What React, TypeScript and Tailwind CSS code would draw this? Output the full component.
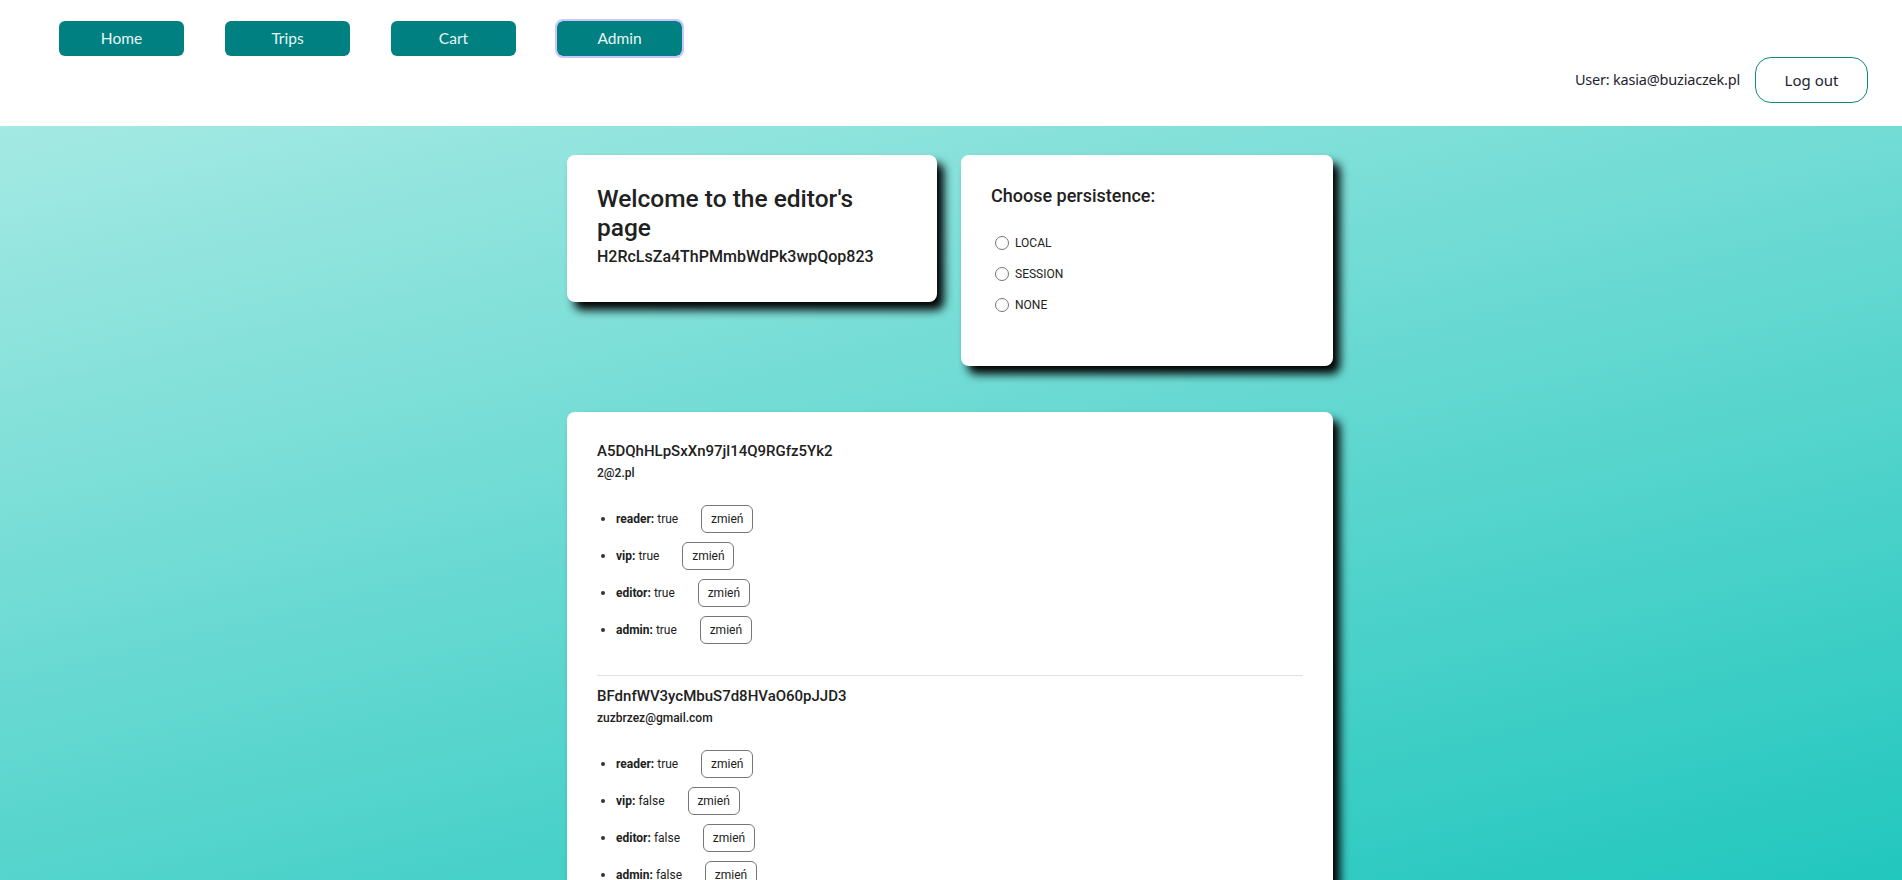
import React from "react";

type Roles = { reader: boolean; vip: boolean; editor: boolean; admin: boolean };

const users: { uid: string; email: string; roles: Roles }[] = [
  {
    uid: "A5DQhHLpSxXn97jl14Q9RGfz5Yk2",
    email: "2@2.pl",
    roles: { reader: true, vip: true, editor: true, admin: true },
  },
  {
    uid: "BFdnfWV3ycMbuS7d8HVaO60pJJD3",
    email: "zuzbrzez@gmail.com",
    roles: { reader: true, vip: false, editor: false, admin: false },
  },
];

const navItems = ["Home", "Trips", "Cart", "Admin"];

const App = () => {
  return (
    <div className="min-h-screen font-['Roboto',sans-serif] text-[#212121]">
      {/* header */}
      <div className="flex justify-between h-[126px] bg-white">
        <div className="flex gap-[41px] pl-[59px] pt-[21px] items-start">
          {navItems.map((item) => (
            <button
              key={item}
              className={
                "w-[125px] h-[35px] rounded-[6px] bg-[#008080] text-[#e8f6f5] text-[15.5px] font-['Lato',sans-serif] " +
                (item === "Admin" ? "outline-2 outline-[#c9c6ff]" : "")
              }
            >
              {item}
            </button>
          ))}
        </div>
        <div className="flex items-center gap-[15px] pr-[34px] pt-[57px] self-start">
          <span className="text-[14.5px] tracking-[-0.2px] font-['Noto_Sans',sans-serif] text-[#1e2330]">
            User: kasia@buziaczek.pl
          </span>
          <button className="w-[113px] h-[46px] rounded-[16px] border border-[#0f8a80] text-[15px] font-['Noto_Sans',sans-serif] text-[#1e2330]">
            Log out
          </button>
        </div>
      </div>

      {/* content */}
      <div className="bg-[linear-gradient(166deg,#a4e9e3_0%,#17c4bb_100%)] pt-[29px] pb-[40px]">
        <div className="w-[766px] mx-auto -translate-x-[1px] flex flex-col gap-[46px]">
          <div className="flex gap-[24px] items-start">
            <div className="w-[370px] h-[147px] bg-white rounded-[8px] shadow-[7px_8px_10px_#000] px-[30px] pt-[29px]">
              <h1 className="w-[300px] text-[24.5px] leading-[29px] font-medium">
                Welcome to the editor's page
              </h1>
              <p className="text-[16px] leading-[20px] font-medium mt-[5px]">
                H2RcLsZa4ThPMmbWdPk3wpQop823
              </p>
            </div>
            <div className="w-[372px] h-[211px] bg-white rounded-[8px] shadow-[7px_8px_10px_#000] px-[30px] pt-[30px]">
              <h2 className="text-[18px] leading-[22px] font-medium">Choose persistence:</h2>
              <div className="flex flex-col mt-[20px]">
                {["LOCAL", "SESSION", "NONE"].map((opt) => (
                  <label key={opt} className="flex items-center h-[31px] gap-[6px] pl-[4px] text-[12px]">
                    <span className="w-[14px] h-[14px] rounded-full border border-[#767676] bg-white" />
                    {opt}
                  </label>
                ))}
              </div>
            </div>
          </div>

          <div className="bg-white rounded-[8px] shadow-[7px_8px_10px_#000] px-[30px] pt-[19px] pb-[20px]">
            {users.map((u, i) => (
              <div
                key={u.uid}
                className={"pt-[10px] pb-[27px] " + (i < users.length - 1 ? "border-b border-[#e0e0e0]" : "")}
              >
                <div className="text-[15px] leading-[20px] font-medium">{u.uid}</div>
                <div className="text-[12px] leading-[16px] font-medium mt-[4px]">{u.email}</div>
                <ul className="mt-[19px]">
                  {(Object.keys(u.roles) as (keyof Roles)[]).map((r) => (
                    <li key={r} className="flex items-center h-[37px] text-[12px]">
                      <span className="w-[4px] h-[4px] rounded-full bg-[#333] ml-[4px] mr-[11px]" />
                      <b className="font-bold">{r}:</b>
                      <span className="ml-[3px]">{String(u.roles[r])}</span>
                      <button className="ml-[23px] w-[52px] h-[28px] rounded-[6px] border border-[#767676] text-[12px]">
                        zmień
                      </button>
                    </li>
                  ))}
                </ul>
              </div>
            ))}
          </div>
        </div>
      </div>
    </div>
  );
};

export default App;
